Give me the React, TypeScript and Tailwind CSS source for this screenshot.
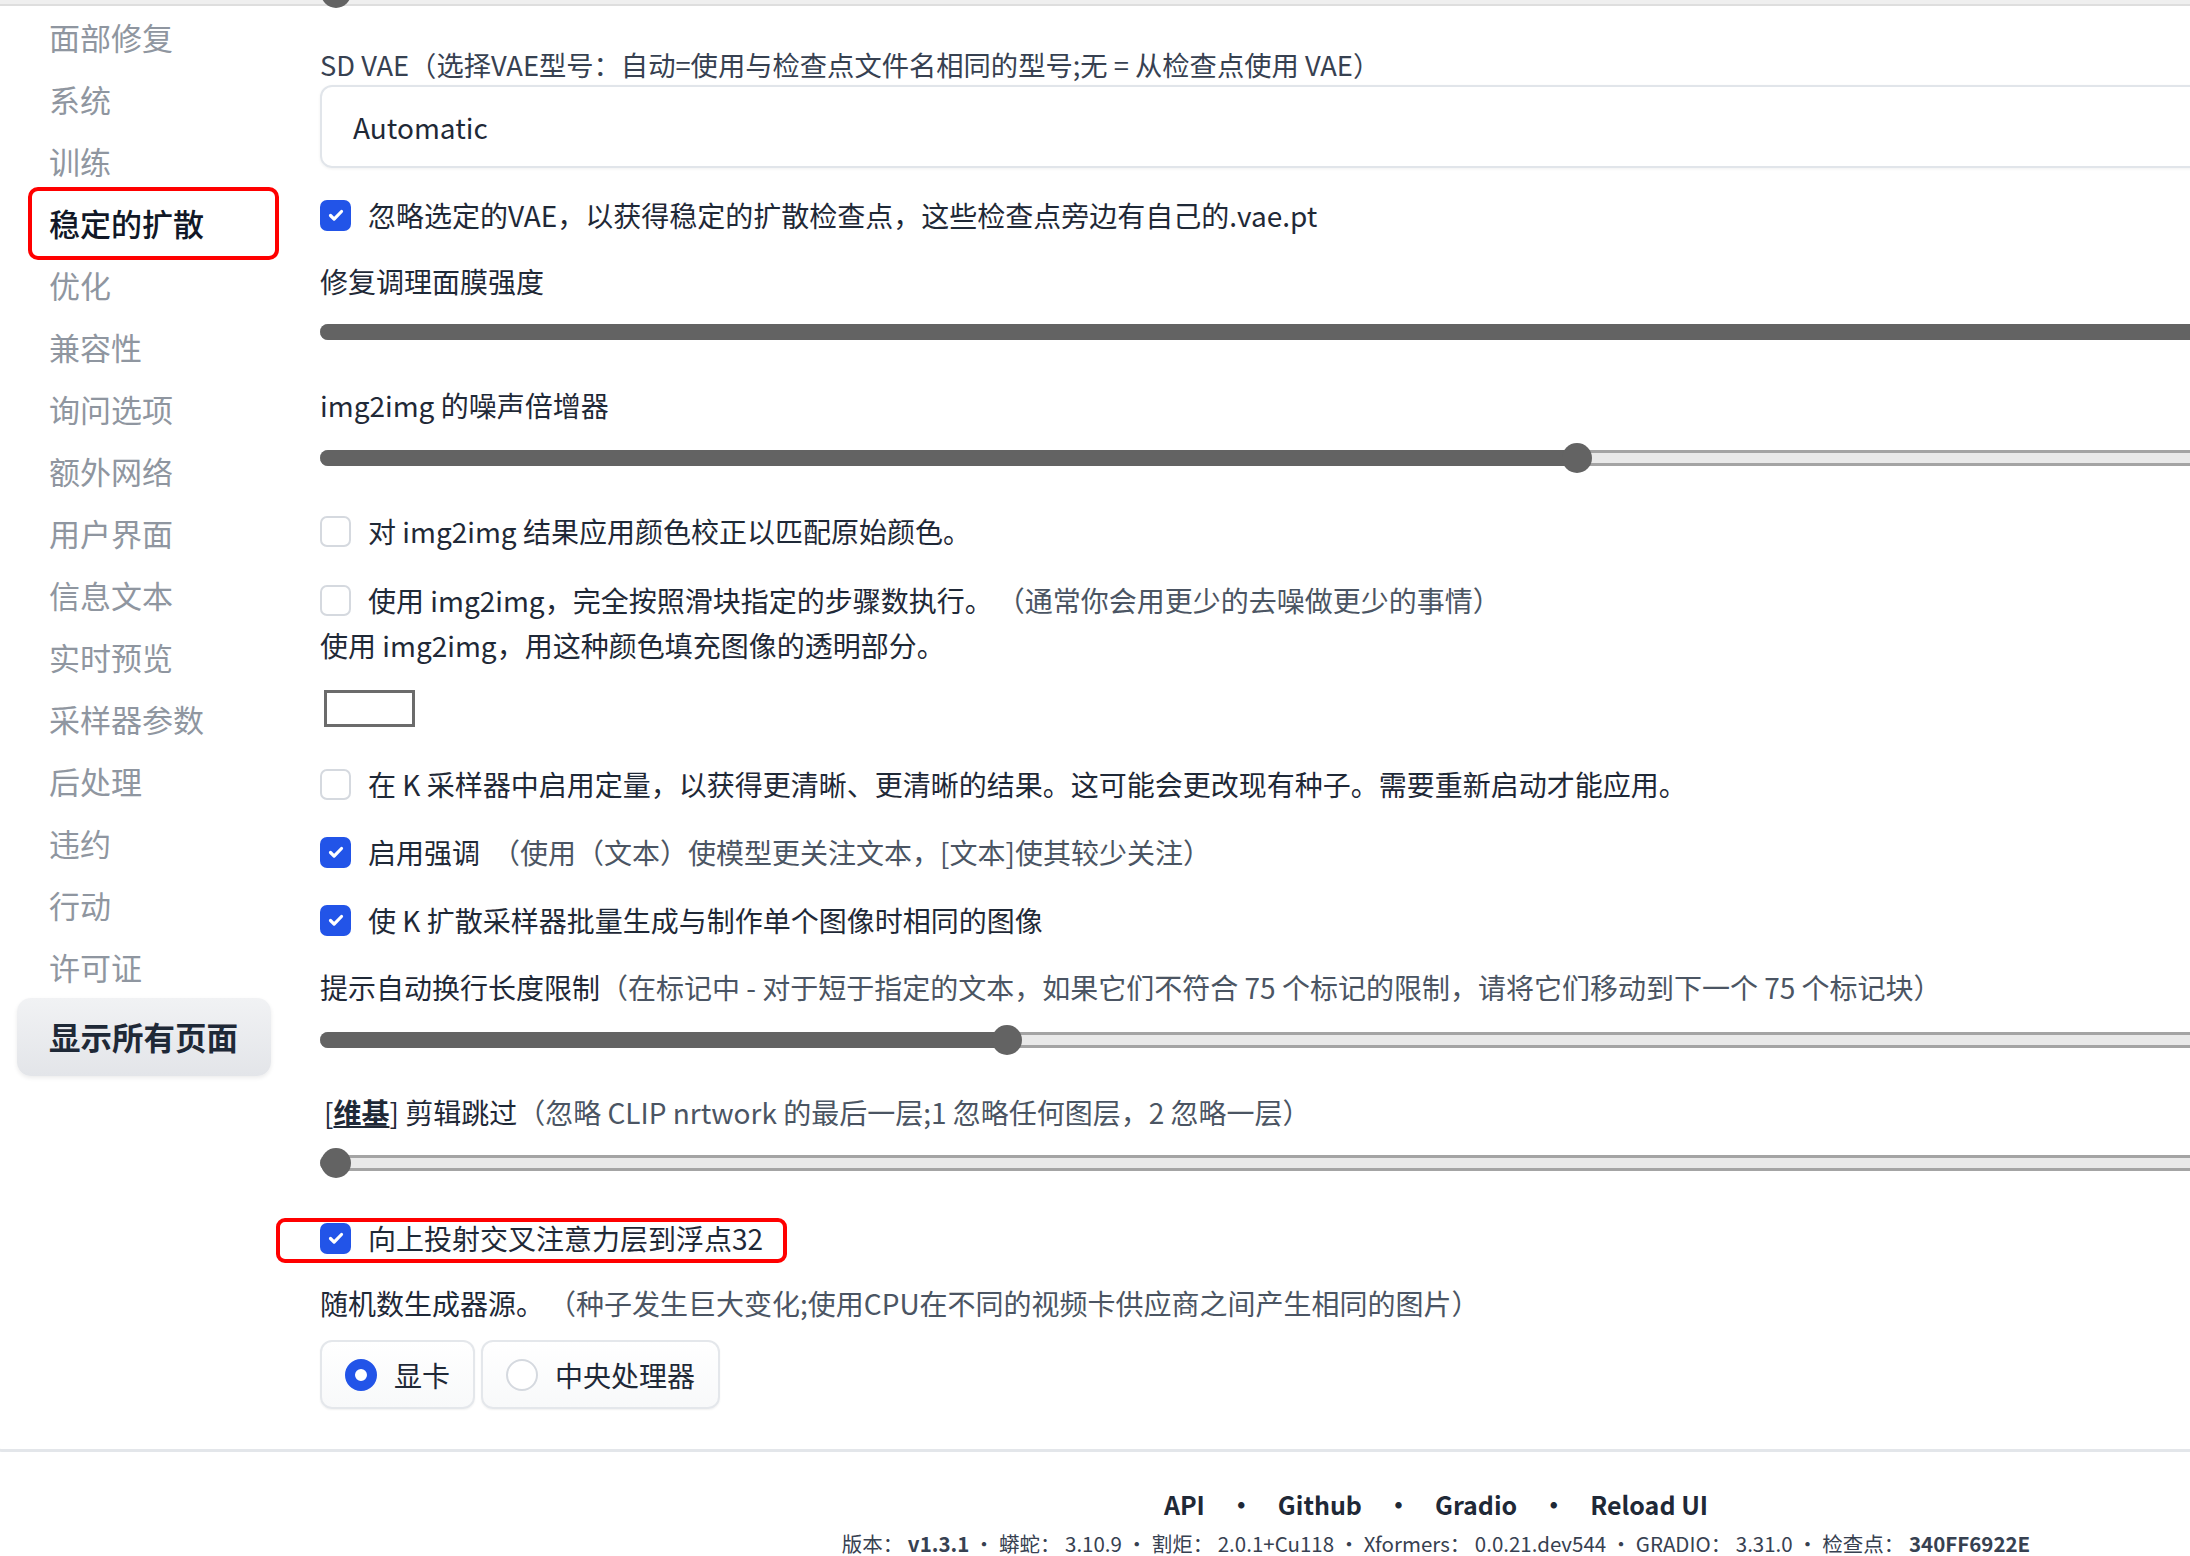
import React from "react";

const sideItems = [
  "面部修复",
  "系统",
  "训练",
  "稳定的扩散",
  "优化",
  "兼容性",
  "询问选项",
  "额外网络",
  "用户界面",
  "信息文本",
  "实时预览",
  "采样器参数",
  "后处理",
  "违约",
  "行动",
  "许可证",
];

function Check({ checked }: { checked: boolean }) {
  if (checked) {
    return (
      <span className="flex h-[31px] w-[31px] shrink-0 items-center justify-center rounded-[7px] bg-[#2254e8]">
        <svg width="20" height="20" viewBox="0 0 20 20" fill="none">
          <path d="M4.5 10.5l3.6 3.6L15.5 6.5" stroke="white" strokeWidth="3.2" strokeLinecap="round" strokeLinejoin="round" />
        </svg>
      </span>
    );
  }
  return <span className="h-[31px] w-[31px] shrink-0 rounded-[7px] border-2 border-[#d5d9df] bg-white" />;
}

function CheckRow({ checked, children, className = "" }: { checked: boolean; children: React.ReactNode; className?: string }) {
  return (
    <div className={`flex h-[36px] items-center gap-[17px] ${className}`}>
      <Check checked={checked} />
      <span className="whitespace-nowrap text-[#1f2937]">{children}</span>
    </div>
  );
}

// thumb = px offset of thumb centre from track start; null = filled past the edge
function Slider({ thumb, className = "" }: { thumb: number | null; className?: string }) {
  const fill = thumb === null ? 3000 : thumb;
  return (
    <div className={`relative h-[32px] w-[2400px] ${className}`}>
      <div className="absolute left-0 right-0 top-[8px] h-[16px] rounded-l-full border-y-[3px] border-[#a4a4a4] bg-[#e9e9e9]" />
      <div className="absolute left-0 top-[8px] h-[16px] rounded-full bg-[#636363]" style={{ width: fill }} />
      {thumb !== null && (
        <div className="absolute top-[1px] h-[30px] w-[30px] rounded-full bg-[#636363]" style={{ left: thumb - 15 }} />
      )}
    </div>
  );
}

function Radio({ selected, label }: { selected: boolean; label: string }) {
  return (
    <div className="flex h-[69px] items-center gap-[17px] rounded-[12px] border-2 border-[#e4e7eb] bg-gradient-to-b from-white to-[#f8f9fa] px-[23px] shadow-[0_1px_2px_rgba(0,0,0,0.06)]">
      {selected ? (
        <span className="h-[32px] w-[32px] rounded-full border-[10px] border-[#2254e8] bg-white" />
      ) : (
        <span className="h-[32px] w-[32px] rounded-full border-2 border-[#d5d9df] bg-white" />
      )}
      <span className="text-[#1f2937]">{label}</span>
    </div>
  );
}

export default function App() {
  return (
    <div className="relative h-[1556px] w-[2190px] overflow-hidden bg-white font-['Noto_Sans_CJK_SC','Noto_Sans',sans-serif]">
      <div className="h-[6px] border-b-2 border-[#dedede] bg-[#efefef]" />
      <div className="absolute left-[321px] top-[-22px] h-[30px] w-[30px] rounded-full bg-[#636363]" />

      <div className="relative -ml-[12px] flex w-[2700px] rounded-bl-[14px] border-b-[3px] border-l-[3px] border-[#e3e6ea] pb-[40px]">
        {/* sidebar */}
        <div className="w-[329px] shrink-0 pl-[9px]">
          {sideItems.map((item) => {
            const active = item === "稳定的扩散";
            return (
              <div key={item} className="relative flex h-[62px] items-center pl-[49px] text-[31px]">
                <span className={active ? "font-medium text-[#111827]" : "text-[#8f96a0]"}>{item}</span>
                {active && (
                  <div className="absolute -bottom-[6px] -top-[5px] left-[28px] w-[251px] rounded-[10px] border-4 border-[#ff0000]" />
                )}
              </div>
            );
          })}
          <div className="ml-[17px] flex h-[78px] w-[254px] items-center rounded-[14px] bg-gradient-to-b from-[#f1f2f4] to-[#e3e5e9] pl-[32px] text-[31.5px] font-bold text-[#1f2937] shadow-[0_2px_4px_rgba(0,0,0,0.08)]">
            显示所有页面
          </div>
        </div>

        {/* main */}
        <div className="flex-1 text-[28px] leading-[36px]">
          <div className="mt-[40px] whitespace-nowrap text-[27.3px] text-[#374151]">
            SD VAE（选择VAE型号：自动=使用与检查点文件名相同的型号;无 = 从检查点使用 VAE）
          </div>
          <div className="mt-[3px] flex h-[83px] w-[2400px] items-center rounded-[12px] border-2 border-[#e1e5ea] pl-[31px] text-[#1f2937] shadow-[0_1px_3px_rgba(0,0,0,0.06)]">
            Automatic
          </div>
          <CheckRow checked className="mt-[29px]">
            忽略选定的VAE，以获得稳定的扩散检查点，这些检查点旁边有自己的.vae.pt
          </CheckRow>

          <div className="mt-[30px] text-[#1f2937]">修复调理面膜强度</div>
          <Slider thumb={null} className="mt-[17px]" />

          <div className="mt-[39px] text-[#1f2937]">img2img 的噪声倍增器</div>
          <Slider thumb={1257} className="mt-[19px]" />

          <CheckRow checked={false} className="mt-[39px]">
            对 img2img 结果应用颜色校正以匹配原始颜色。
          </CheckRow>
          <CheckRow checked={false} className="mt-[33px]">
            使用 img2img，完全按照滑块指定的步骤数执行。
            <span className="ml-[18px] text-[#4b5563]">（通常你会用更少的去噪做更少的事情）</span>
          </CheckRow>
          <div className="mt-[9px] text-[#1f2937]">使用 img2img，用这种颜色填充图像的透明部分。</div>
          <div className="ml-[4px] mt-[27px] h-[37px] w-[91px] border-[3px] border-[#6b6b6b] bg-white" />

          <CheckRow checked={false} className="mt-[39px]">
            在 K 采样器中启用定量，以获得更清晰、更清晰的结果。这可能会更改现有种子。需要重新启动才能应用。
          </CheckRow>
          <CheckRow checked className="mt-[32px]">
            启用强调
            <span className="ml-[12px] text-[#4b5563]">（使用（文本）使模型更关注文本，[文本]使其较少关注）</span>
          </CheckRow>
          <CheckRow checked className="mt-[32px]">
            使 K 扩散采样器批量生成与制作单个图像时相同的图像
          </CheckRow>

          <div className="mt-[31px] whitespace-nowrap text-[#1f2937]">
            提示自动换行长度限制
            <span className="text-[#4b5563]">
              （在标记中 - 对于短于指定的文本，如果它们不符合 75 个标记的限制，请将它们移动到下一个 75 个标记块）
            </span>
          </div>
          <Slider thumb={687} className="mt-[19px]" />

          <div className="ml-[4px] mt-[34px] whitespace-nowrap leading-[44px] text-[#1f2937]">
            [<span className="font-bold underline">维基</span>] 剪辑跳过
            <span className="text-[#4b5563]">（忽略 CLIP nrtwork 的最后一层;1 忽略任何图层，2 忽略一层）</span>
          </div>
          <Slider thumb={16} className="mt-[13px]" />

          <div className="relative mt-[41px]">
            <CheckRow checked>向上投射交叉注意力层到浮点32</CheckRow>
            <div className="absolute -left-[44px] -top-[2px] h-[45px] w-[511px] rounded-[9px] border-4 border-[#ff0000]" />
          </div>

          <div className="mt-[29px] whitespace-nowrap text-[#1f2937]">
            随机数生成器源。
            <span className="ml-[18px] text-[#4b5563]">（种子发生巨大变化;使用CPU在不同的视频卡供应商之间产生相同的图片）</span>
          </div>
          <div className="mt-[19px] flex gap-[6px]">
            <Radio selected label="显卡" />
            <Radio selected={false} label="中央处理器" />
          </div>
        </div>
      </div>

      {/* footer */}
      <div className="w-[2872px] pt-[34px] text-center">
        <div className="flex items-center justify-center gap-[24px] text-[25px] font-bold leading-[36px] text-[#1f2937]">
          <span>API</span>
          <span>•</span>
          <span>Github</span>
          <span>•</span>
          <span>Gradio</span>
          <span>•</span>
          <span>Reload UI</span>
        </div>
        <div className="mt-[6px] whitespace-nowrap text-[20.5px] leading-[30px] text-[#374151]">
          版本： <span className="font-semibold">v1.3.1</span> • 蟒蛇： 3.10.9 • 割炬： 2.0.1+Cu118 • Xformers： 0.0.21.dev544 • GRADIO： 3.31.0 • 检查点：{" "}
          <span className="font-semibold">340FF6922E</span>
        </div>
      </div>
    </div>
  );
}
